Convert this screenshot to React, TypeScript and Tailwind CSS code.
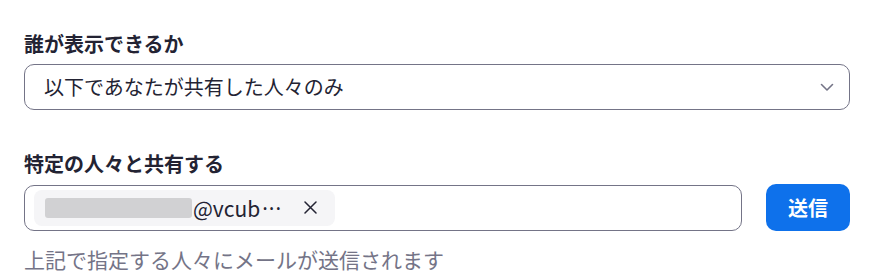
const App = () => {
  return (
    <div
      className="h-[279px] w-[877px] bg-white px-6 pt-[30px] text-[#232333]"
      style={{ fontFamily: '"Noto Sans CJK JP", "Noto Sans", sans-serif' }}
    >
      <div className="text-[20px] font-bold leading-[28px]">誰が表示できるか</div>

      <div className="mt-[6px] flex h-[46px] w-[826px] items-center justify-between rounded-[10px] border border-[#747487] pl-[19px] pr-[14px]">
        <span className="text-[20px] leading-[28px]">以下であなたが共有した人々のみ</span>
        <svg width="16" height="16" viewBox="0 0 16 16" fill="none">
          <path d="M2.5 5.5L8 11l5.5-5.5" stroke="#747487" strokeWidth="1.6" strokeLinecap="round" strokeLinejoin="round" />
        </svg>
      </div>

      <div className="mt-[40px] text-[20px] font-bold leading-[28px]">特定の人々と共有する</div>

      <div className="mt-[6px] flex items-center gap-6">
        <div className="flex h-[46px] w-[718px] items-center rounded-[10px] border border-[#747487] px-[9px]">
          <div className="flex h-[36px] w-[301px] items-center rounded-[8px] bg-[#f5f5f7] pl-[11px]">
            <span className="inline-block h-[20px] w-[147px] rounded-[3px] bg-[#d1d1d3]" />
            <span className="ml-[1px] text-[21px] leading-[28px]">@vcub</span>
            <span
              className="ml-[2px] text-[21px] leading-[28px] tracking-[1px]"
              style={{ fontFamily: '"Noto Sans", sans-serif' }}
            >
              ···
            </span>
            <svg className="ml-[22px]" width="13" height="13" viewBox="0 0 13 13" fill="none">
              <path d="M1 1l11 11M12 1L1 12" stroke="#232333" strokeWidth="1.5" strokeLinecap="round" />
            </svg>
          </div>
        </div>
        <button className="flex h-[47px] w-[84px] items-center justify-center rounded-[10px] bg-[#0e71eb] text-[20px] font-bold text-white">
          送信
        </button>
      </div>

      <div className="mt-[14px] text-[21px] leading-[28px] text-[#747487]">上記で指定する人々にメールが送信されます</div>
    </div>
  );
};

export default App;
